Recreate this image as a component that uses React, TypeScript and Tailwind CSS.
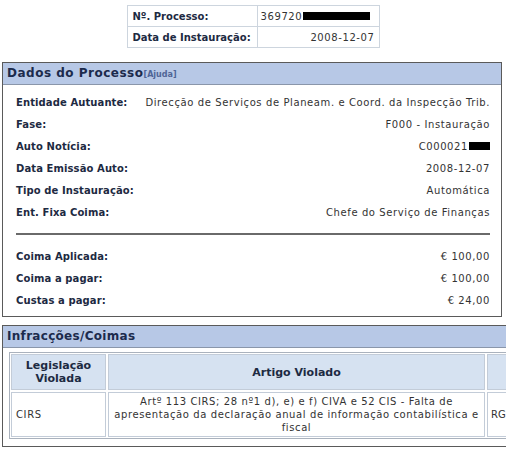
import React from "react";

const rows1 = [
  ["Entidade Autuante:", "Direcção de Serviços de Planeam. e Coord. da Inspecção Trib."],
  ["Fase:", "F000 - Instauração"],
  ["Auto Notícia:", "C000021"],
  ["Data Emissão Auto:", "2008-12-07"],
  ["Tipo de Instauração:", "Automática"],
  ["Ent. Fixa Coima:", "Chefe do Serviço de Finanças"],
];
const rows2 = [
  ["Coima Aplicada:", "€ 100,00"],
  ["Coima a pagar:", "€ 100,00"],
  ["Custas a pagar:", "€ 24,00"],
];

function Row({ label, value, redact }: { label: string; value: string; redact?: boolean }) {
  return (
    <div className="flex items-center justify-between h-[22px]">
      <span className="font-bold text-[#1d2a42] whitespace-nowrap tracking-[0.1px]">{label}</span>
      <span className="text-[#333] whitespace-nowrap flex items-center tracking-[0.6px]">
        {value}
        {redact && <span className="inline-block w-[21px] h-[8px] bg-black ml-[1px]" />}
      </span>
    </div>
  );
}

export default function App() {
  return (
    <div
      className="w-[506px] h-[451px] overflow-hidden bg-white text-[10px] leading-[13px]"
      style={{ fontFamily: '"DejaVu Sans", Verdana, sans-serif' }}
    >
      <div className="flex justify-center pt-[5px]">
        <table className="border-collapse border border-[#cdd5de]">
          <tbody>
            <tr className="h-[21px]">
              <td className="border border-[#cdd5de] w-[130px] pl-[5px] font-bold text-[#1d2a42]">Nº. Processo:</td>
              <td className="border border-[#cdd5de] w-[122px] pl-[3px] text-[#333] tracking-[0.6px]">
                <span className="flex items-center">
                  369720<span className="inline-block w-[67px] h-[8px] bg-black ml-[1px]" />
                </span>
              </td>
            </tr>
            <tr className="h-[21px]">
              <td className="border border-[#cdd5de] pl-[5px] font-bold text-[#1d2a42]">Data de Instauração:</td>
              <td className="border border-[#cdd5de] pr-[4px] text-right text-[#333] tracking-[0.6px]">2008-12-07</td>
            </tr>
          </tbody>
        </table>
      </div>

      <div className="mt-[14px] ml-[2px] w-[500px] border border-[#5a5a5a]">
        <div className="h-[22px] bg-[#b7c8e6] border-b border-[#8a96aa] flex items-center pl-[4px]">
          <span className="font-bold text-[12px] text-[#1c2b4d] tracking-[0.5px]">Dados do Processo</span>
          <span className="font-bold text-[8px] text-[#4f6596] mt-[1px]">[Ajuda]</span>
        </div>
        <div className="pl-[13px] pr-[11px] pt-[6px] pb-[5px]">
          {rows1.map(([l, v], i) => (
            <Row key={i} label={l} value={v} redact={l === "Auto Notícia:"} />
          ))}
          <div className="h-[2px] bg-[#6a6a6a] mt-[10px] mb-[10px]" />
          {rows2.map(([l, v], i) => (
            <Row key={i} label={l} value={v} />
          ))}
        </div>
      </div>

      <div className="mt-[8px] ml-[2px] w-[540px] border border-[#5a5a5a]">
        <div className="h-[22px] bg-[#b7c8e6] border-b border-[#8a96aa] flex items-center pl-[4px]">
          <span className="font-bold text-[12px] text-[#1c2b4d] tracking-[0.3px]">Infracções/Coimas</span>
        </div>
        <div className="pl-[6px] pt-[4px] pb-[7px]">
          <div className="border border-[#aab2bd] p-[1px] w-[540px]">
            <div className="grid grid-cols-[95px_377px_60px] gap-[2px]">
              <div className="h-[36px] bg-[#d6e2f1] border border-[#c3ccd8] flex items-center justify-center text-center font-bold text-[#1d2a42] text-[11px] leading-[13px]">
                Legislação<br />Violada
              </div>
              <div className="h-[36px] bg-[#d6e2f1] border border-[#c3ccd8] flex items-center justify-center font-bold text-[#1d2a42] text-[11px]">
                Artigo Violado
              </div>
              <div className="h-[36px] bg-[#d6e2f1] border border-[#c3ccd8]" />
              <div className="h-[45px] border border-[#c3ccd8] flex items-center pl-[4px] text-[#333] tracking-[0.6px]">CIRS</div>
              <div className="h-[45px] border border-[#c3ccd8] flex items-center justify-center text-center text-[#333] px-[4px] tracking-[0.6px]">
                Artº 113 CIRS; 28 nº1 d), e) e f) CIVA e 52 CIS - Falta de apresentação da declaração anual de informação contabilística e fiscal
              </div>
              <div className="h-[45px] border border-[#c3ccd8] flex items-center pl-[3px] text-[#333]">RG</div>
            </div>
          </div>
        </div>
      </div>
    </div>
  );
}
